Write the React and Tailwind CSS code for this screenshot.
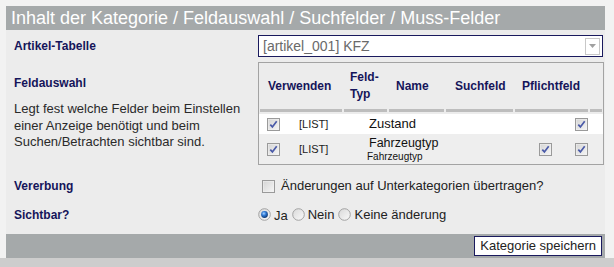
import React from "react";

function Check({ checked = true }) {
  return (
    <svg width="13" height="13" viewBox="0 0 13 13" className="shrink-0">
      <defs>
        <linearGradient id="cbg" x1="0" y1="0" x2="1" y2="1">
          <stop offset="0" stopColor="#d6d6d6" />
          <stop offset="1" stopColor="#f4f4f4" />
        </linearGradient>
      </defs>
      <rect x="0.5" y="0.5" width="12" height="12" fill="#f2f2f2" stroke="#9a9a9a" />
      <rect x="1.5" y="1.5" width="10" height="10" fill="url(#cbg)" />
      {checked && (
        <path d="M3.3 6.6 L5.4 8.9 L9.7 3.2" fill="none" stroke="#4a5aa8" strokeWidth="1.7" />
      )}
    </svg>
  );
}

function Radio({ on = false }) {
  return (
    <svg width="13" height="13" viewBox="0 0 13 13" className="shrink-0">
      <defs>
        <radialGradient id="rOn" cx="0.4" cy="0.35" r="0.6">
          <stop offset="0" stopColor="#a9d4ff" />
          <stop offset="0.5" stopColor="#2f7ad6" />
          <stop offset="1" stopColor="#13407e" />
        </radialGradient>
        <linearGradient id="rOff" x1="0" y1="0" x2="1" y2="1">
          <stop offset="0" stopColor="#d8d8d8" />
          <stop offset="1" stopColor="#fafafa" />
        </linearGradient>
      </defs>
      <circle cx="6.5" cy="6.5" r="5.8" fill="url(#rOff)" stroke="#a2a2a2" strokeWidth="1" />
      {on && <circle cx="6.5" cy="6.5" r="3.4" fill="url(#rOn)" />}
    </svg>
  );
}

export default function App() {
  const font = { fontFamily: '"Liberation Sans", Arial, sans-serif' };
  return (
    <div className="w-[614px] h-[267px] bg-[#f2f2f2] overflow-hidden flex flex-col" style={font}>
      <div className="pt-[6px] pl-[6px] pr-[9px] flex-1">
        <div className="bg-[#ececec] h-full flex flex-col">
          <div className="h-[24px] shrink-0 bg-[#a5a9aa] text-white text-[18px] leading-[24px] pl-[5px] whitespace-nowrap">
            Inhalt der Kategorie / Feldauswahl / Suchfelder / Muss-Felder
          </div>

          {/* Artikel-Tabelle */}
          <div className="flex items-center h-[31px] shrink-0 pt-[1px]">
            <div className="w-[252px] pl-[8px] text-[12px] font-bold text-[#15155a]">Artikel-Tabelle</div>
            <div className="w-[345px] h-[22px] border border-[#1a1a5e] bg-white flex items-center justify-between">
              <span className="pl-[4px] text-[14px] text-[#6a6a6a]">[artikel_001] KFZ</span>
              <div className="w-[15px] h-[17px] mr-[2px] border border-[#c8c8c8] bg-white flex items-center justify-center">
                <svg width="7" height="4" viewBox="0 0 7 4"><path d="M0 0 H7 L3.5 4 Z" fill="#a0a0a0" /></svg>
              </div>
            </div>
          </div>

          {/* Feldauswahl */}
          <div className="flex pt-[1px] shrink-0">
            <div className="w-[252px] pl-[8px]">
              <div className="pt-[12px] text-[12px] font-bold text-[#15155a]">Feldauswahl</div>
              <div className="pt-[9px] text-[13px] leading-[16.5px] text-[#2a2a2a]">
                Legt fest welche Felder beim Einstellen einer Anzeige benötigt und beim Suchen/Betrachten sichtbar sind.
              </div>
            </div>
            <div className="w-[346px] h-[103px] border border-[#a3a3a3] flex flex-col">
              <div className="flex gap-[2px] h-[49px] shrink-0 px-[1px] text-[12px] font-bold text-[#15155a]">
                <div className="w-[82px] border-b-[3px] border-[#bdbdbd] flex items-center pl-[8px]">Verwenden</div>
                <div className="w-[43px] border-b-[3px] border-[#bdbdbd] flex items-center pl-[6px] leading-[17px]">Feld-<br />Typ</div>
                <div className="w-[55px] border-b-[3px] border-[#bdbdbd] flex items-center pl-[7px]">Name</div>
                <div className="w-[67px] border-b-[3px] border-[#bdbdbd] flex items-center pl-[9px]">Suchfeld</div>
                <div className="w-[73px] border-b-[3px] border-[#bdbdbd] flex items-center pl-[7px] whitespace-nowrap">Pflichtfeld</div>
                <div className="flex-1 border-b-[3px] border-[#bdbdbd]" />
              </div>
              <div className="h-[2px] shrink-0" />
              <div className="flex items-center h-[20px] shrink-0 bg-white">
                <div className="w-[40px] pl-[8px] flex"><Check /></div>
                <div className="w-[70px] text-[11px] text-[#222]">[LIST]</div>
                <div className="w-[170px] text-[13px] text-[#111]">Zustand</div>
                <div className="w-[36px]" />
                <div className="w-[27px] flex"><Check /></div>
              </div>
              <div className="flex items-center h-[30px] shrink-0 bg-[#eeeeee]">
                <div className="w-[40px] pl-[8px] flex"><Check /></div>
                <div className="w-[70px] text-[11px] text-[#222]">[LIST]</div>
                <div className="w-[170px] text-[#111] flex flex-col">
                  <span className="text-[12.5px] leading-[15px]">Fahrzeugtyp</span>
                  <span className="text-[10px] leading-[12px] -ml-[2px]">Fahrzeugtyp</span>
                </div>
                <div className="w-[36px] flex"><Check /></div>
                <div className="w-[27px] flex"><Check /></div>
              </div>
            </div>
          </div>

          {/* Vererbung */}
          <div className="flex items-center h-[28px] mt-[7px] shrink-0">
            <div className="w-[256px] pl-[8px] text-[12px] font-bold text-[#15155a]">Vererbung</div>
            <Check checked={false} />
            <span className="pl-[6px] text-[13px] text-[#222]">Änderungen auf Unterkategorien übertragen?</span>
          </div>

          {/* Sichtbar */}
          <div className="flex items-center h-[29px] shrink-0">
            <div className="w-[252px] pl-[8px] text-[12px] font-bold text-[#15155a]">Sichtbar?</div>
            <div className="flex items-center text-[13px] text-[#222]">
              <Radio on />
              <span className="pl-[3px] pr-[4px] pt-[3px]">Ja</span>
              <Radio />
              <span className="pl-[3px] pr-[4px]">Nein</span>
              <Radio />
              <span className="pl-[3px]">Keine änderung</span>
            </div>
          </div>

          <div className="mt-auto h-[24px] shrink-0 bg-[#a5a9aa] flex items-center justify-end pr-[3px]">
            <button className="h-[20px] px-[5px] border border-[#1a1a5e] bg-white text-[13px] text-[#222] leading-[18px]">
              Kategorie speichern
            </button>
          </div>
        </div>
      </div>
      <div className="h-[9px] shrink-0 bg-[#cdcdcd]" />
    </div>
  );
}
